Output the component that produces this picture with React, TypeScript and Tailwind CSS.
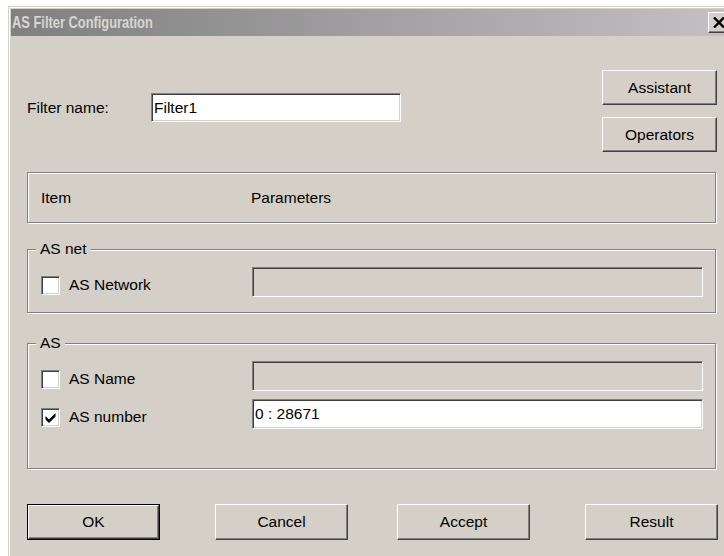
import React from "react";

type BtnProps = { label: string; w: string; h: string; isDefault?: boolean };

// Classic raised 3D push button
function PushButton({ label, w, h, isDefault }: BtnProps) {
  const face = (
    <div className="flex h-full w-full items-center justify-center border border-t-white border-l-white border-r-[#404040] border-b-[#404040] bg-[#d4d0c8] shadow-[inset_-1px_-1px_0_#808080]">
      {label}
    </div>
  );
  if (isDefault) {
    return <div className={`${w} ${h} border border-black`}>{face}</div>;
  }
  return <div className={`${w} ${h}`}>{face}</div>;
}

// Sunken edit field
function Field({ value, enabled, w, h }: { value?: string; enabled: boolean; w: string; h: string }) {
  return (
    <div
      className={`${w} ${h} flex items-center border border-t-[#808080] border-l-[#808080] border-r-white border-b-white pl-[2px] shadow-[inset_1px_1px_0_#404040,inset_-1px_-1px_0_#d4d0c8] ${
        enabled ? "bg-white" : "bg-[#d4d0c8]"
      }`}
    >
      {value}
    </div>
  );
}

function CheckBox({ checked }: { checked?: boolean }) {
  return (
    <div className="flex h-[19px] w-[19px] shrink-0 items-center justify-center border border-t-[#808080] border-l-[#808080] border-r-white border-b-white bg-white shadow-[inset_1px_1px_0_#404040,inset_-1px_-1px_0_#d4d0c8]">
      {checked && (
        <svg width="15" height="15" viewBox="0 0 15 15">
          <polygon points="2.5,6 6,9.5 12.5,3 12.5,6.5 6,13 2.5,9.5" fill="#000" />
        </svg>
      )}
    </div>
  );
}

function OptionRow({ label, checked, value, enabled }: { label: string; checked?: boolean; value?: string; enabled: boolean }) {
  return (
    <div className="flex items-center">
      <div className="mt-[6px] flex w-[211px] items-center">
        <CheckBox checked={checked} />
        <span className="ml-[9px]">{label}</span>
      </div>
      <Field value={value} enabled={enabled} w="w-[451px]" h="h-[30px]" />
    </div>
  );
}

function Group({ title, children, h, mt }: { title: string; children: React.ReactNode; h: string; mt: string }) {
  return (
    <div className={`relative ${mt} ${h} w-[689px] border border-[#808080] pl-[13px] pt-[17px] shadow-[inset_1px_1px_0_#fff,1px_1px_0_#fff]`}>
      <span className="absolute left-[8px] top-[-11px] bg-[#d4d0c8] px-[4px] leading-[20px]">{title}</span>
      {children}
    </div>
  );
}

export default function App() {
  return (
    <div className="relative h-[556px] w-[724px] overflow-hidden bg-white pl-[8px] pt-[6px] font-['Liberation_Sans',Arial,sans-serif] text-[15.5px] text-black">
      <div className="h-[560px] w-[725px] border-l border-t border-[#d4d0c8] bg-[#d4d0c8]">
        <div className="h-full border-l border-t border-white p-[1px]">
          {/* Title bar (inactive) */}
          <div className="flex h-[27px] items-center bg-linear-to-r from-[#808080] to-[#c4c0c4] pl-[1px]">
            <span className="origin-left scale-x-[0.78] text-[16.5px] font-bold whitespace-nowrap text-[#d8d6d2]">
              AS Filter Configuration
            </span>
            <div className="ml-auto mr-[3px] flex h-[21px] w-[21px] items-center justify-center border border-t-white border-l-white border-r-[#404040] border-b-[#404040] bg-[#d4d0c8] shadow-[inset_-1px_-1px_0_#808080]">
              <svg width="12" height="11" viewBox="0 0 12 11">
                <path d="M1 0.5 L11 10.5 M11 0.5 L1 10.5" stroke="#000" strokeWidth="2.4" />
              </svg>
            </div>
          </div>

          {/* Dialog body */}
          <div className="pl-[16px] pt-[34px]">
            <div className="flex w-[690px] items-start">
              <div className="mt-[23px] flex items-center">
                <span className="w-[124px]">Filter name:</span>
                <Field value="Filter1" enabled w="w-[250px]" h="h-[29px]" />
              </div>
              <div className="ml-auto flex flex-col gap-[12px]">
                <PushButton label="Assistant" w="w-[115px]" h="h-[35px]" />
                <PushButton label="Operators" w="w-[115px]" h="h-[35px]" />
              </div>
            </div>

            <div className="mt-[20px] flex h-[51px] w-[689px] items-center border border-[#808080] pl-[13px] shadow-[inset_1px_1px_0_#fff,1px_1px_0_#fff]">
              <span className="w-[210px]">Item</span>
              <span>Parameters</span>
            </div>

            <Group title="AS net" mt="mt-[26px]" h="h-[64px]">
              <OptionRow label="AS Network" enabled={false} />
            </Group>

            <Group title="AS" mt="mt-[30px]" h="h-[126px]">
              <div className="flex flex-col gap-[8px]">
                <OptionRow label="AS Name" enabled={false} />
                <OptionRow label="AS number" checked value="0 : 28671" enabled />
              </div>
            </Group>

            <div className="mt-[35px] flex">
              <PushButton label="OK" w="w-[133px]" h="h-[36px]" isDefault />
              <div className="ml-[55px]">
                <PushButton label="Cancel" w="w-[133px]" h="h-[36px]" />
              </div>
              <div className="ml-[49px]">
                <PushButton label="Accept" w="w-[133px]" h="h-[36px]" />
              </div>
              <div className="ml-[55px]">
                <PushButton label="Result" w="w-[133px]" h="h-[36px]" />
              </div>
            </div>
          </div>
        </div>
      </div>
    </div>
  );
}
